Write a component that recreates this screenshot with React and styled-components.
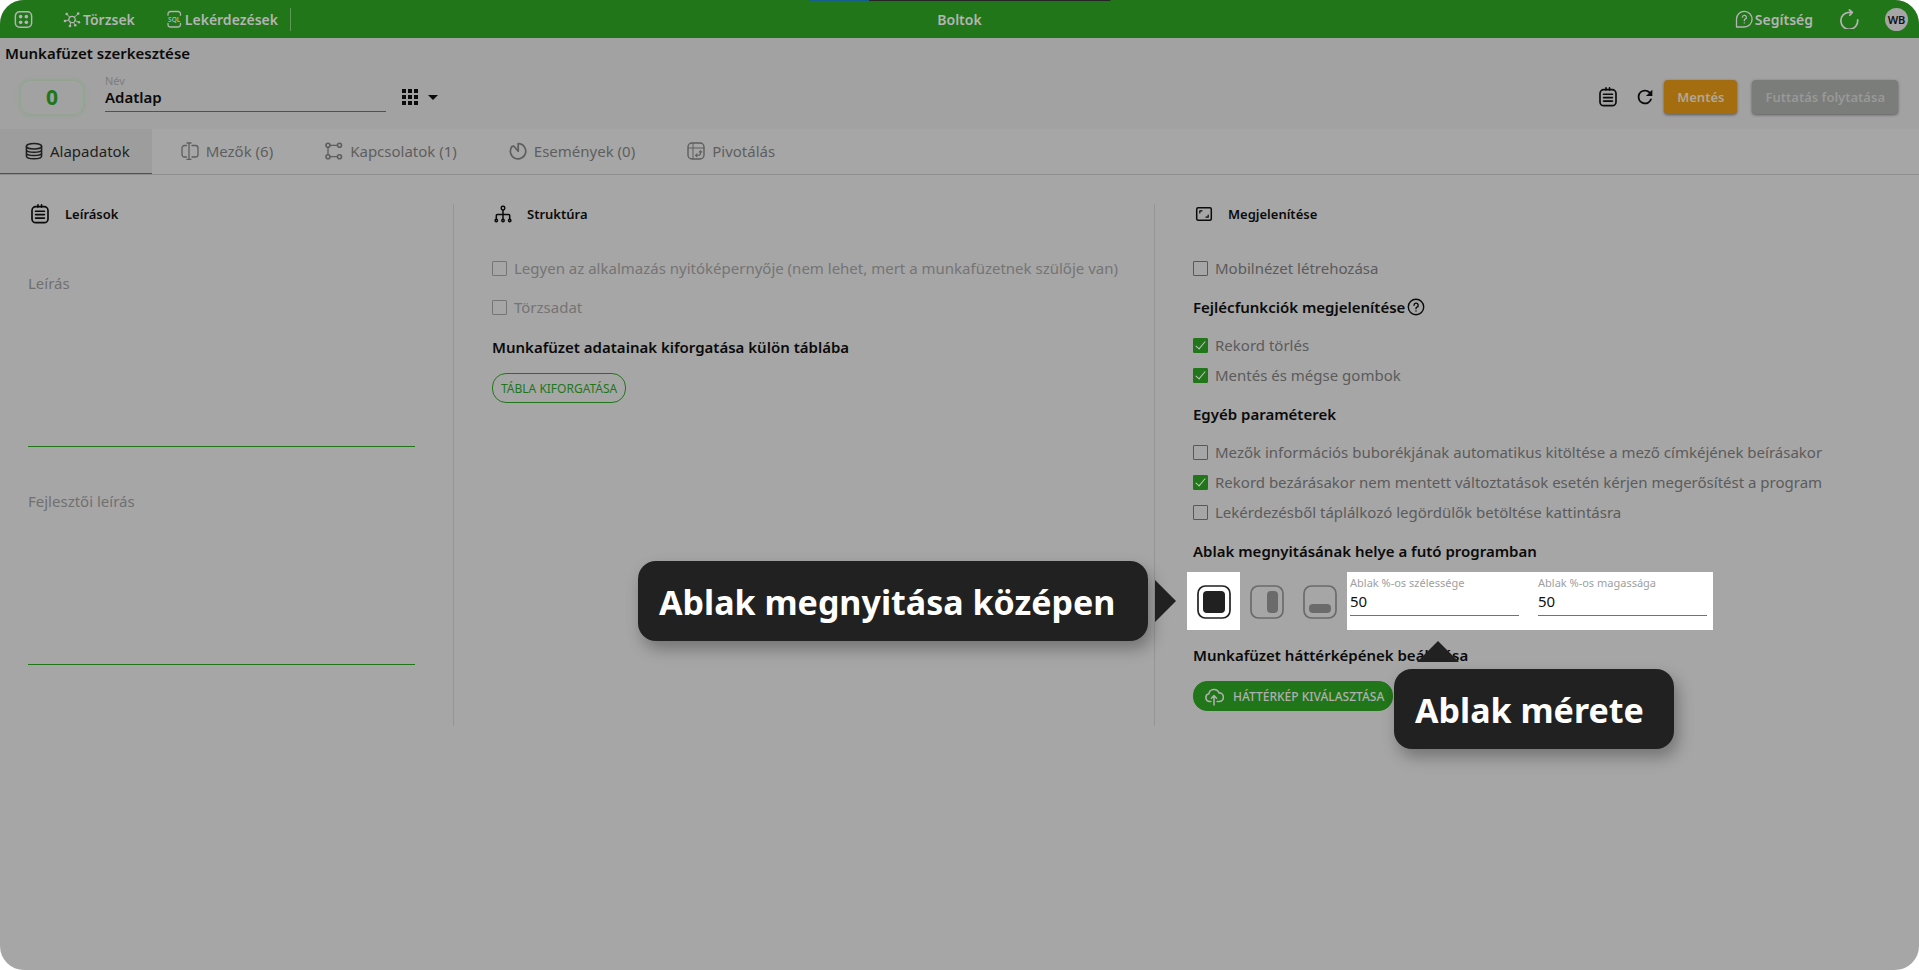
import styled, { createGlobalStyle, css } from "styled-components";

const GlobalStyle = createGlobalStyle`
    *, *::before, *::after{
        box-sizing: border-box;
    }

    body{
        margin: 0;
        background-color: white;
        font-family: "Noto Sans", "Open Sans", sans-serif;
        font-size: 15px;
        color: #0b0b0b;
    }

    button, input, textarea{
        font-family: inherit;
    }

    h1, h2, h3{
        margin: 0;
    }
`;

const Window = styled.div`
    position: relative;
    min-height: 100vh;
    border-radius: 24px;
    overflow: hidden;
    background-color: #a6a6a6;
`;

const TopStrip = styled.div`
    position: absolute;
    top: 0;
    left: 50%;
    width: 301px;
    height: 1px;
    transform: translateX(-50%);
    background: linear-gradient(to right, #155f8c 60px, #252525 60px);
`;

const TopBar = styled.header`
    height: 38px;
    display: grid;
    grid-template-columns: 1fr auto 1fr;
    align-items: center;
    background-color: #21761a;
    color: #b4b4b4;
    font-size: 14px;
    font-weight: 600;

    h1{
        font-size: 14px;
        font-weight: 600;
    }
`;

const TopNav = styled.nav`
    display: flex;
    align-items: center;
    gap: 30px;
    padding-left: 14px;

    hr{
        width: 1px;
        height: 23px;
        margin: 0 0 0 -18px;
        border: 0;
        background-color: #5f9659;
    }
`;

const TopTools = styled.div`
    display: flex;
    align-items: center;
    justify-content: flex-end;
    gap: 26px;
    padding-right: 11px;
`;

const TopLink = styled.a`
    display: flex;
    align-items: center;
    gap: 2px;
    color: inherit;
    text-decoration: none;
`;

const IconButton = styled.button`
    display: flex;
    align-items: center;
    gap: 10px;
    padding: 0;
    border: 0;
    background: none;
    color: inherit;
`;

const Avatar = styled.button`
    width: 23px;
    height: 23px;
    padding: 0;
    border: 0;
    border-radius: 50%;
    background-color: #a6a6a6;
    color: #101018;
    font-size: 11px;
    font-weight: 600;
`;

const EditorHeader = styled.section`
    height: 91px;
    padding: 5px;
    background-color: #a2a2a2;

    h2{
        font-size: 15px;
        line-height: 20px;
        font-weight: 600;
    }
`;

const EditorRow = styled.div`
    display: flex;
    align-items: flex-end;
    height: 53px;
    padding: 0 16px 2px;
`;

const CounterBadge = styled.div`
    width: 62px;
    height: 33px;
    border: 1px solid #96ac94;
    border-radius: 9px;
    box-shadow: 0 0 5px #7fa37c;
    color: #21761a;
    font-size: 21px;
    line-height: 31px;
    font-weight: 700;
    text-align: center;
`;

const NameField = styled.div`
    width: 281px;
    margin: 0 16px 2px 22px;

    label{
        display: block;
        color: #7d7d7d;
        font-size: 11px;
        line-height: 14px;
    }

    input{
        display: block;
        width: 100%;
        height: 24px;
        padding: 0 0 5px;
        border: 0;
        border-bottom: 1px solid #21761a;
        background: none;
        color: #0b0b0b;
        font-size: 15px;
        font-weight: 600;
    }
`;

const RowTools = styled.div`
    display: flex;
    align-items: center;
    height: 34px;
`;

const EditorActions = styled(RowTools)`
    margin-left: auto;
`;

const ActionIcons = styled.div`
    display: flex;
    gap: 16px;
    margin-right: 8px;
`;

const ActionButton = styled.button`
    height: 34px;
    padding: 0 13px;
    border: 0;
    border-radius: 4px;
    box-shadow: 0 1px 3px rgba(0, 0, 0, .45);
    background-color: ${({ $muted }) => ($muted ? "#7a7d7a" : "#a46d0f")};
    color: ${({ $muted }) => ($muted ? "#989898" : "#b0a894")};
    font-size: 13px;
    font-weight: 600;

    & + &{
        margin-left: 15px;
    }
`;

const Tabs = styled.nav`
    display: flex;
    gap: 2px;
    border-bottom: 1px solid #8f8f8f;
`;

const Tab = styled.button`
    display: flex;
    align-items: center;
    gap: 7px;
    height: 45px;
    padding: 0 22px 0 25px;
    border: 0;
    border-bottom: 1px solid transparent;
    background: none;
    color: #5e5e5e;
    font-size: 15px;

    & + &{
        padding: 0 23px 0 27px;
    }

    ${({ $active }) => $active && css`
        border-color: #21761a;
        background-color: #9d9d9d;
        color: #1f1f1f;
    `}
`;

const Columns = styled.main`
    display: grid;
    grid-template-columns: 454fr 701fr 764fr;
    padding-top: 29px;
`;

const Column = styled.section`
    min-width: 0;
    min-height: 522px;
    padding: 0 38px;

    & + &{
        padding-right: 0;
    }

    &:first-child{
        padding-left: 28px;
    }

    &:not(:last-child){
        border-right: 1px solid #959595;
    }
`;

const ColumnTitle = styled.h2`
    display: flex;
    align-items: center;
    gap: 15px;
    height: 20px;
    padding-left: 2px;
    font-size: 13px;
    font-weight: 600;
`;

const SubTitle = styled.h3`
    display: flex;
    align-items: center;
    gap: 2px;
    height: 20px;
    font-size: 15px;
    font-weight: 600;
    white-space: nowrap;
`;

const Description = styled.div`
    margin-top: 34px;

    & + &{
        margin-top: 29px;
    }

    label{
        display: block;
        padding-top: 15px;
        line-height: 20px;
        color: #707070;
    }

    textarea{
        display: block;
        width: 100%;
        height: 154px;
        border: 0;
        border-bottom: 1px solid #21761a;
        background: none;
        resize: none;
    }
`;

const CheckList = styled.div`
    display: flex;
    flex-direction: column;
    gap: ${({ $gap }) => $gap || 10}px;
    margin: ${({ $top }) => $top || 18}px 0 ${({ $bottom }) => $bottom || 19}px;
`;

const CheckRow = styled.label`
    display: flex;
    align-items: center;
    gap: 7px;
    height: 20px;
    color: ${({ $disabled }) => ($disabled ? "#747474" : "#5b5b5b")};
    white-space: nowrap;
`;

const CheckInput = styled.input`
    appearance: none;
    width: 15px;
    height: 15px;
    margin: 0;
    border: 1px solid #585858;
    border-radius: 1px;

    &:disabled{
        border-color: #747474;
    }

    &:checked{
        border-color: #21761a;
        background-color: #21761a;
    }

    &:checked::after{
        content: "";
        display: block;
        width: 5px;
        height: 10px;
        margin: 0 auto;
        border: solid #c4c4c4;
        border-width: 0 1px 1px 0;
        transform: rotate(40deg);
    }
`;

const PillButton = styled.button`
    display: flex;
    align-items: center;
    gap: 9px;
    height: 30px;
    margin-top: 16px;
    padding: 0 8px 0 ${({ $filled }) => ($filled ? 10 : 8)}px;
    border: 1px solid #21761a;
    border-radius: 14px;
    background-color: ${({ $filled }) => ($filled ? "#21761a" : "transparent")};
    color: ${({ $filled }) => ($filled ? "#b0b0b0" : "#21761a")};
    font-size: 12px;
    font-weight: ${({ $filled }) => ($filled ? 500 : 400)};
    text-transform: uppercase;
    white-space: nowrap;
`;

const WindowPlace = styled.div`
    display: flex;
    height: 58px;
    margin: 11px 0 15px -6px;
`;

const PlaceOption = styled.div`
    position: relative;
    display: flex;
    align-items: center;
    justify-content: center;
    width: 53px;
    padding-top: 2px;
    background-color: ${({ $highlighted }) => ($highlighted ? "white" : "transparent")};
    color: ${({ $highlighted }) => ($highlighted ? "#212121" : "#6b6b6b")};
`;

const SizeFields = styled.div`
    position: relative;
    display: flex;
    gap: 19px;
    margin-left: 1px;
    padding: 4px 6px 0 3px;
    background-color: white;
`;

const SizeField = styled.div`
    width: 169px;

    label{
        display: block;
        color: #a0a0a0;
        font-size: 11px;
        line-height: 14px;
        white-space: nowrap;
    }

    input{
        display: block;
        width: 100%;
        height: 26px;
        padding: 0 0 4px;
        border: 0;
        border-bottom: 1px solid #33a02c;
        background: none;
        color: #111;
        font-size: 15px;
    }
`;

const Callout = styled.div`
    position: absolute;
    z-index: 1;
    display: flex;
    align-items: center;
    height: 80px;
    padding: 2px 0 0 21px;
    border-radius: 18px;
    box-shadow: 4px 8px 16px rgba(0, 0, 0, .3);
    background-color: #212121;
    color: white;
    font-size: 34px;
    font-weight: 700;
    white-space: nowrap;

    &::before{
        content: "";
        position: absolute;
        background-color: #212121;
    }

    ${({ $side }) => $side === "left" ? css`
        top: -11px;
        right: calc(100% + 39px);
        width: 510px;

        &::before{
            top: 19px;
            left: calc(100% + 7px);
            width: 21px;
            height: 42px;
            clip-path: polygon(0 0, 100% 50%, 0 100%);
        }
    ` : css`
        top: calc(100% + 39px);
        left: 47px;
        width: 280px;

        &::before{
            bottom: calc(100% + 7px);
            left: 23px;
            width: 42px;
            height: 21px;
            clip-path: polygon(50% 0, 100% 100%, 0 100%);
        }
    `}
`;

const Svg = ({ size = 18, width = 1.5, children }) => (
    <svg width={size} height={size} viewBox="0 0 18 18" fill="none" stroke="currentColor"
        strokeWidth={width} strokeLinecap="round" strokeLinejoin="round" aria-hidden="true">
        {children}
    </svg>
);

const AppsIcon = () => (
    <Svg size={19} width={1.4}>
        <rect x="1.3" y="1.6" width="15.4" height="14.8" rx="4" />
        <g fill="currentColor" stroke="none">
            <circle cx="6.3" cy="6.3" r="1.7" />
            <circle cx="11.7" cy="6.3" r="1.7" />
            <circle cx="6.3" cy="11.7" r="1.7" />
            <circle cx="11.7" cy="11.7" r="1.7" />
        </g>
    </Svg>
);

const HubIcon = () => (
    <Svg width={1.2}>
        <circle cx="9" cy="9.5" r="3.2" />
        <path d="M6.7 7.2 4 4.5M11.3 7.2 15 4M5.8 10 2.5 10.8M10.5 12.4 11.8 14.5M12 10.5l3.5 1.6M7.7 12.4 7.2 15" strokeWidth="1" />
        <g fill="currentColor" stroke="none">
            <circle cx="3.7" cy="4" r="1.3" />
            <circle cx="15.2" cy="3.6" r="1.3" />
            <circle cx="2" cy="11" r="1.3" />
            <circle cx="12.3" cy="15.3" r="1.3" />
            <circle cx="16" cy="12.3" r="1.2" />
            <circle cx="7" cy="16" r="1.3" />
        </g>
    </Svg>
);

const SqlIcon = () => (
    <Svg width={1.3}>
        <path d="M3 5.2V4a2.5 2.5 0 0 1 2.5-2.5H13A2.5 2.5 0 0 1 15.5 4v1.2M3 13.5v1A2.5 2.5 0 0 0 5.5 17H13a2.5 2.5 0 0 0 2.5-2.5v-1" />
        <text x="9.2" y="11.6" textAnchor="middle" fontSize="6.5" fontWeight="600" fill="currentColor" stroke="none">SQL</text>
    </Svg>
);

const BubbleIcon = () => (
    <Svg width={1.3}>
        <path d="M1.5 17V9A7.8 7.8 0 1 1 9.3 17Z" />
        <path d="M7.4 7.2a2 2 0 1 1 2.7 2q-.8.4-.8 1.5M9.3 12.8v.1" />
    </Svg>
);

const ReloadIcon = () => (
    <Svg size={20}>
        <path d="M16.8 9.8A7.6 7.6 0 1 1 9.2 3h2.6M9.4.8 12 3 9.700 5.600" />
    </Svg>
);

const NotesIcon = () => (
    <Svg size={20}>
        <rect x="1.8" y="2.4" width="14.4" height="14.4" rx="3.4" />
        <path d="M5 6.5h8M5 9.5h8M5 12.7h8M7.2.8v2M10.4.8v2" />
    </Svg>
);

const RefreshIcon = () => (
    <svg width="22" height="22" viewBox="0 0 24 24" fill="currentColor" aria-hidden="true">
        <path d="M17.65 6.35A7.96 7.96 0 0 0 12 4a8 8 0 1 0 7.73 10h-2.08A6 6 0 1 1 12 6c1.66 0 3.14.69 4.22 1.78L13 11h7V4z" />
    </svg>
);

const GridIcon = () => (
    <svg width="16" height="16" viewBox="0 0 16 16" fill="currentColor" aria-hidden="true">
        {[0, 6, 12].map((y) => [0, 6, 12].map((x) => (
            <rect key={`${x}-${y}`} x={x} y={y} width="4" height="4" />
        )))}
    </svg>
);

const CaretIcon = () => (
    <svg width="10" height="5" viewBox="0 0 10 5" fill="currentColor" aria-hidden="true">
        <path d="M0 0h10L5 5z" />
    </svg>
);

const DatabaseIcon = () => (
    <Svg>
        <ellipse cx="9" cy="4.2" rx="7.6" ry="2.8" />
        <path d="M1.4 4.2v9.8c0 1.6 3.4 2.8 7.6 2.8s7.6-1.2 7.6-2.8V4.2M1.4 7.5c0 1.6 3.4 2.8 7.6 2.8s7.6-1.2 7.6-2.8M1.4 10.8c0 1.6 3.4 2.8 7.6 2.8s7.6-1.2 7.6-2.8" />
    </Svg>
);

const FieldsIcon = () => (
    <Svg width={1.3}>
        <path d="M5.5 3.5h-2A2.5 2.5 0 0 0 1 6v6.5A2.5 2.5 0 0 0 3.5 15h2M11 3.5h3.5A2.5 2.5 0 0 1 17 6v6.500a2.500 2.500 0 0 1-2.500 2.500H11M8 1.500v15.500M6 1h4M6 17.300h4" />
    </Svg>
);

const LinksIcon = () => (
    <Svg width={1.6}>
        <circle cx="3" cy="3.3" r="2" />
        <circle cx="14.5" cy="3.3" r="2" />
        <circle cx="3" cy="14.7" r="2" />
        <circle cx="14.5" cy="14.7" r="2" />
        <path d="M5 3.3h7.5M5 14.7h7.5M3 5.5v7" strokeWidth="1.3" />
    </Svg>
);

const EventsIcon = () => (
    <Svg width={1.7}>
        <path d="M9.2 9.2V1.500A7.700 7.700 0 1 1 2.900 4.600L4.700 4l4.500 5.200" />
    </Svg>
);

const PivotIcon = () => (
    <Svg width={1.4}>
        <rect x="1" y="1" width="16" height="16" rx="4" />
        <path d="M6 1.5v15M1.5 6h15" strokeWidth="1" />
        <path d="M8.5 13.3h2.7q2.3 0 2.3-2.3V9M9.9 12l-1.300 1.300 1.300 1.300M12.200 10.100l1.300-1.300 1.300 1.300" strokeWidth="1.1" />
    </Svg>
);

const TreeIcon = () => (
    <Svg>
        <rect x="7.3" y="1.2" width="3.4" height="3.8" rx="1.4" />
        <path d="M9 5.2v9M2.3 14v-3.5q0-1 1-1h11.4q1 0 1 1V14" />
        <circle cx="2.3" cy="15.5" r="1.2" />
        <circle cx="9" cy="15.5" r="1.2" />
        <circle cx="15.7" cy="15.5" r="1.2" />
    </Svg>
);

const AspectIcon = () => (
    <Svg>
        <rect x="1.7" y="2.700" width="14.600" height="12.600" rx="1.500" />
        <path d="M4.800 8V5.800H7M13.200 10v2.200H11" strokeWidth="1.200" />
    </Svg>
);

const HelpIcon = () => (
    <Svg width={1.4}>
        <circle cx="9" cy="9" r="7.7" />
        <path d="M7 7.200a2.100 2.100 0 1 1 2.900 2q-.9.400-.9 1.500M9 13v.1" />
    </Svg>
);

const UploadIcon = () => (
    <Svg size={20} width={1.4}>
        <path d="M6.200 14H4.600a3.600 3.600 0 0 1-.3-7A4.800 4.800 0 0 1 13.500 6.200a3.900 3.900 0 0 1 .2 7.800h-1.900M9 17V9M6.700 11 9 8.700 11.300 11" />
    </Svg>
);

const PlaceIcon = ({ x, y, width, height }) => (
    <svg width="34" height="34" viewBox="0 0 34 34" aria-hidden="true">
        <rect x="1" y="1" width="32" height="32" rx="7.5" fill="none" stroke="currentColor" strokeWidth="1.7" />
        <rect x={x} y={y} width={width} height={height} rx="4" fill="currentColor" />
    </svg>
);

const tabs = [
    { label: "Alapadatok", Icon: DatabaseIcon },
    { label: "Mezők (6)", Icon: FieldsIcon },
    { label: "Kapcsolatok (1)", Icon: LinksIcon },
    { label: "Események (0)", Icon: EventsIcon },
    { label: "Pivotálás", Icon: PivotIcon },
];

const Check = ({ label, ...props }) => (
    <CheckRow $disabled={props.disabled}>
        <CheckInput type="checkbox" {...props} />
        {label}
    </CheckRow>
);

const App = () => {
    return (
        <>
            <GlobalStyle />
            <Window>
                <TopStrip />
                <TopBar>
                    <TopNav>
                        <IconButton aria-label="Alkalmazások"><AppsIcon /></IconButton>
                        <TopLink href="#torzsek"><HubIcon />Törzsek</TopLink>
                        <TopLink href="#lekerdezesek"><SqlIcon />Lekérdezések</TopLink>
                        <hr />
                    </TopNav>
                    <h1>Boltok</h1>
                    <TopTools>
                        <TopLink href="#segitseg"><BubbleIcon />Segítség</TopLink>
                        <IconButton aria-label="Újratöltés"><ReloadIcon /></IconButton>
                        <Avatar>WB</Avatar>
                    </TopTools>
                </TopBar>

                <EditorHeader>
                    <h2>Munkafüzet szerkesztése</h2>
                    <EditorRow>
                        <CounterBadge>0</CounterBadge>
                        <NameField>
                            <label htmlFor="nev">Név</label>
                            <input id="nev" defaultValue="Adatlap" />
                        </NameField>
                        <RowTools>
                            <IconButton aria-label="Nézet"><GridIcon /><CaretIcon /></IconButton>
                        </RowTools>
                        <EditorActions>
                            <ActionIcons>
                                <IconButton aria-label="Jegyzetek"><NotesIcon /></IconButton>
                                <IconButton aria-label="Frissítés"><RefreshIcon /></IconButton>
                            </ActionIcons>
                            <ActionButton>Mentés</ActionButton>
                            <ActionButton $muted>Futtatás folytatása</ActionButton>
                        </EditorActions>
                    </EditorRow>
                </EditorHeader>

                <Tabs>
                    {tabs.map(({ label, Icon }, i) => (
                        <Tab key={label} $active={i === 0}><Icon />{label}</Tab>
                    ))}
                </Tabs>

                <Columns>
                    <Column>
                        <ColumnTitle><NotesIcon />Leírások</ColumnTitle>
                        <Description>
                            <label htmlFor="leiras">Leírás</label>
                            <textarea id="leiras" />
                        </Description>
                        <Description>
                            <label htmlFor="fejlesztoi">Fejlesztői leírás</label>
                            <textarea id="fejlesztoi" />
                        </Description>
                    </Column>

                    <Column>
                        <ColumnTitle><TreeIcon />Struktúra</ColumnTitle>
                        <CheckList $top={34} $gap={19} $bottom={20}>
                            <Check disabled label="Legyen az alkalmazás nyitóképernyője (nem lehet, mert a munkafüzetnek szülője van)" />
                            <Check disabled label="Törzsadat" />
                        </CheckList>
                        <SubTitle>Munkafüzet adatainak kiforgatása külön táblába</SubTitle>
                        <PillButton>Tábla kiforgatása</PillButton>
                    </Column>

                    <Column>
                        <ColumnTitle><AspectIcon />Megjelenítése</ColumnTitle>
                        <CheckList $top={34}>
                            <Check label="Mobilnézet létrehozása" />
                        </CheckList>
                        <SubTitle>Fejlécfunkciók megjelenítése<HelpIcon /></SubTitle>
                        <CheckList>
                            <Check defaultChecked label="Rekord törlés" />
                            <Check defaultChecked label="Mentés és mégse gombok" />
                        </CheckList>
                        <SubTitle>Egyéb paraméterek</SubTitle>
                        <CheckList>
                            <Check label="Mezők információs buborékjának automatikus kitöltése a mező címkéjének beírásakor" />
                            <Check defaultChecked label="Rekord bezárásakor nem mentett változtatások esetén kérjen megerősítést a program" />
                            <Check label="Lekérdezésből táplálkozó legördülők betöltése kattintásra" />
                        </CheckList>
                        <SubTitle>Ablak megnyitásának helye a futó programban</SubTitle>
                        <WindowPlace>
                            <PlaceOption $highlighted>
                                <IconButton aria-label="Középen"><PlaceIcon x={6} y={6} width={22} height={22} /></IconButton>
                                <Callout $side="left">Ablak megnyitása középen</Callout>
                            </PlaceOption>
                            <PlaceOption>
                                <IconButton aria-label="Jobb oldalon"><PlaceIcon x={17} y={6} width={11} height={22} /></IconButton>
                            </PlaceOption>
                            <PlaceOption>
                                <IconButton aria-label="Alul"><PlaceIcon x={6} y={19} width={22} height={9} /></IconButton>
                            </PlaceOption>
                            <SizeFields>
                                <SizeField>
                                    <label htmlFor="szelesseg">Ablak %-os szélessége</label>
                                    <input id="szelesseg" defaultValue="50" />
                                </SizeField>
                                <SizeField>
                                    <label htmlFor="magassag">Ablak %-os magassága</label>
                                    <input id="magassag" defaultValue="50" />
                                </SizeField>
                                <Callout $side="bottom">Ablak mérete</Callout>
                            </SizeFields>
                        </WindowPlace>
                        <SubTitle>Munkafüzet háttérképének beállítása</SubTitle>
                        <PillButton $filled><UploadIcon />Háttérkép kiválasztása</PillButton>
                    </Column>
                </Columns>
            </Window>
        </>
    );
}

export default App;
